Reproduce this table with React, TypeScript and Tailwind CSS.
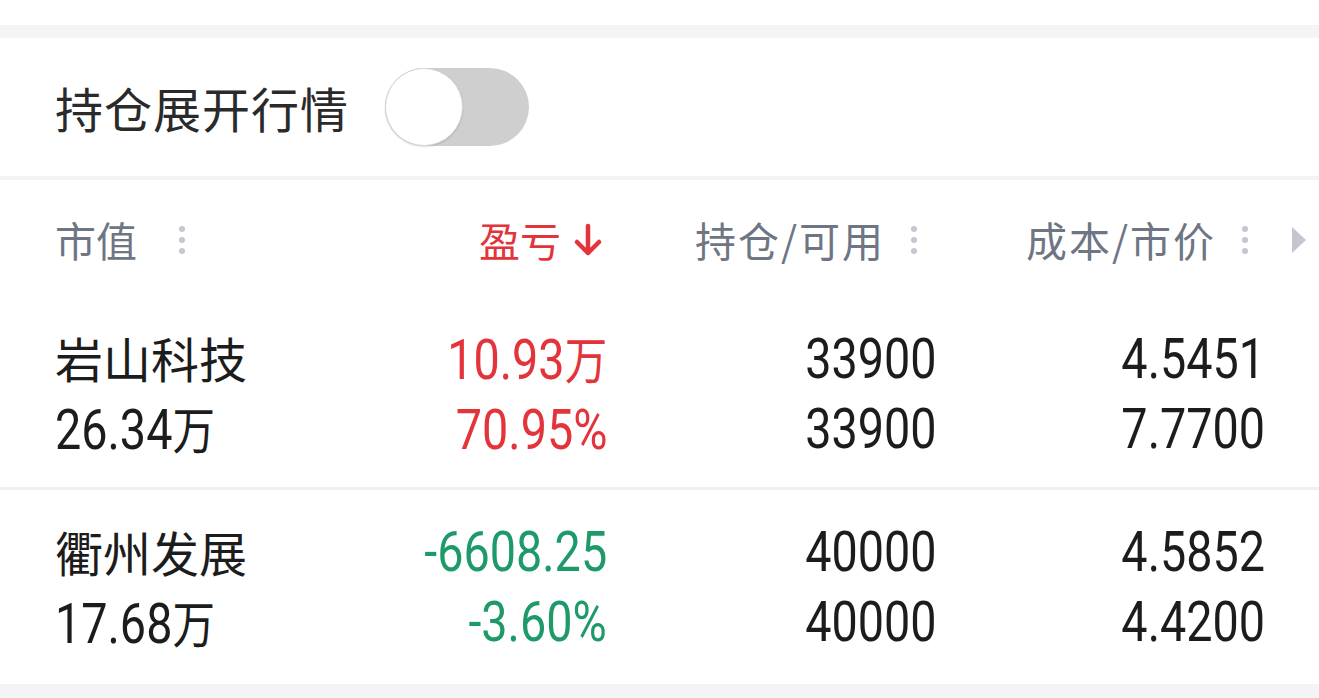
import React from "react";

const CJK = "font-['Noto_Sans_CJK_SC',sans-serif]";
const NUM = "font-['Roboto','Noto_Sans_CJK_SC',sans-serif]";

function Dots() {
  return (
    <span className="inline-flex flex-col gap-[5px] items-center justify-center">
      <span className="w-[6px] h-[6px] rounded-full bg-[#c3c7ce]" />
      <span className="w-[6px] h-[6px] rounded-full bg-[#c3c7ce]" />
      <span className="w-[6px] h-[6px] rounded-full bg-[#c3c7ce]" />
    </span>
  );
}

function Wan() {
  return <span className={`${CJK} text-[50px]`}>万</span>;
}

type Row = {
  name: string;
  mv: React.ReactNode;
  pl1: React.ReactNode;
  pl2: string;
  color: string;
  hold: string;
  avail: string;
  cost: string;
  price: string;
};

const rows: Row[] = [
  {
    name: "岩山科技",
    mv: (
      <>
        26.34
        <Wan />
      </>
    ),
    pl1: (
      <>
        10.93
        <Wan />
      </>
    ),
    pl2: "70.95%",
    color: "text-[#e3343b]",
    hold: "33900",
    avail: "33900",
    cost: "4.5451",
    price: "7.7700",
  },
  {
    name: "衢州发展",
    mv: (
      <>
        17.68
        <Wan />
      </>
    ),
    pl1: "-6608.25",
    pl2: "-3.60%",
    color: "text-[#1e9a68]",
    hold: "40000",
    avail: "40000",
    cost: "4.5852",
    price: "4.4200",
  },
];

function Num({ children, left }: { children: React.ReactNode; left?: boolean }) {
  return (
    <span
      className={`${NUM} inline-block text-[55px] leading-[70px] whitespace-nowrap scale-x-[0.85] ${
        left ? "origin-left" : "origin-right"
      }`}
    >
      {children}
    </span>
  );
}

function DataRow({ r, h }: { r: Row; h: string }) {
  return (
    <div className={`flex items-center pl-[55px] ${h}`}>
      <div className="w-[300px] flex flex-col items-start text-[#1c1c1c]">
        <span className={`${CJK} text-[48px] leading-[70px]`}>{r.name}</span>
        <Num left>{r.mv}</Num>
      </div>
      <div className={`w-[252px] flex flex-col items-end ${r.color}`}>
        <Num>{r.pl1}</Num>
        <Num>{r.pl2}</Num>
      </div>
      <div className="w-[330px] flex flex-col items-end text-[#1c1c1c]">
        <Num>{r.hold}</Num>
        <Num>{r.avail}</Num>
      </div>
      <div className="w-[328px] flex flex-col items-end text-[#1c1c1c]">
        <Num>{r.cost}</Num>
        <Num>{r.price}</Num>
      </div>
    </div>
  );
}

export default function App() {
  return (
    <div className="w-[1319px] h-[698px] bg-white overflow-hidden flex flex-col">
      <div className="h-[25px] bg-white shrink-0" />
      <div className="h-[13px] bg-[#f4f4f5] shrink-0" />
      <div className="h-[138px] shrink-0 flex items-center pl-[55px] gap-[36px]">
        <span className={`${CJK} text-[48px] text-[#2a2a2a] tracking-[1px]`}>持仓展开行情</span>
        <div className="w-[144px] h-[78px] rounded-full bg-[#cfcfcf] flex items-center">
          <div className="w-[78px] h-[78px] rounded-full bg-white border border-[#d8d8d8] shadow-[0_1px_2px_rgba(0,0,0,0.15)]" />
        </div>
      </div>
      <div className="h-[4px] bg-[#f2f3f5] shrink-0" />
      <div className={`h-[120px] shrink-0 flex items-center pl-[55px] ${CJK} text-[41px] text-[#6e7684]`}>
        <div className="w-[300px] flex items-center gap-[42px]">
          <span>市值</span>
          <Dots />
        </div>
        <div className="w-[252px] flex items-center justify-end text-[#e3343b]">
          <span>盈亏</span>
          <svg width="30" height="34" viewBox="0 0 30 34" className="ml-[12px] mr-[4px]">
            <path d="M15 3 V30 M4 19 L15 30 L26 19" stroke="#e3343b" strokeWidth="4.5" fill="none" strokeLinecap="round" strokeLinejoin="round" />
          </svg>
        </div>
        <div className="w-[330px] flex items-center justify-end gap-[26px] pr-[20px]">
          <span className="tracking-[2px]">持仓/可用</span>
          <Dots />
        </div>
        <div className="w-[328px] flex items-center justify-end gap-[26px] pr-[17px]">
          <span className="tracking-[2px]">成本/市价</span>
          <Dots />
        </div>
        <div className="ml-[27px]">
          <svg width="14" height="26" viewBox="0 0 14 26">
            <path d="M0 0 L14 13 L0 26 Z" fill="#c3c6cc" />
          </svg>
        </div>
      </div>
      <DataRow r={rows[0]} h="h-[187px] shrink-0" />
      <div className="h-[3px] bg-[#eff0f2] shrink-0" />
      <DataRow r={rows[1]} h="h-[194px] shrink-0" />
      <div className="flex-1 bg-[#f4f4f5]" />
    </div>
  );
}
